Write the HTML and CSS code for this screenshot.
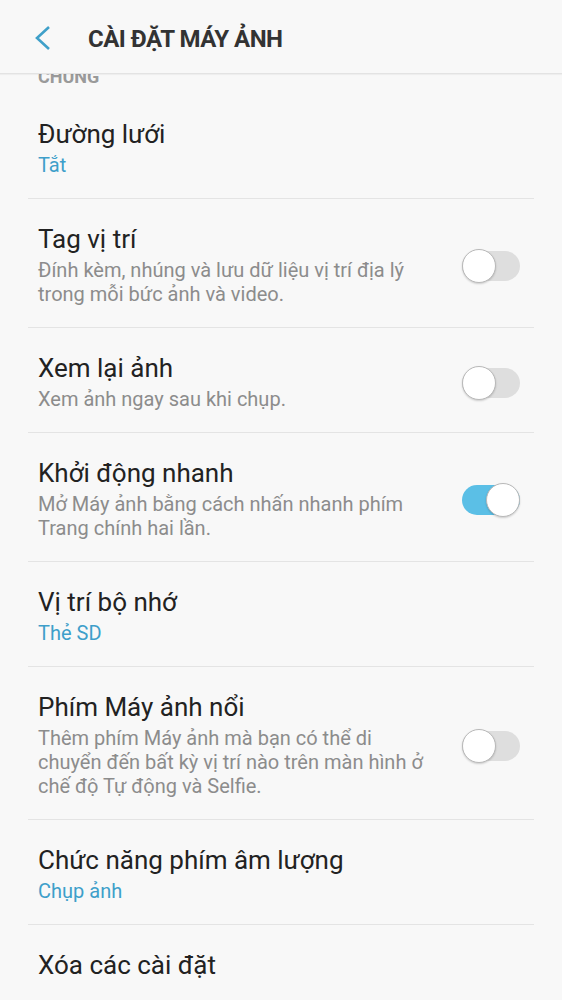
FILE: index.html
```html
<!DOCTYPE html>
<html lang="vi">
<head>
<meta charset="utf-8">
<title>Cài đặt máy ảnh</title>
<link rel="stylesheet" href="styles.css">
</head>
<body>
<div class="screen">
  <header class="appbar">
    <svg class="back" width="18" height="26" viewBox="0 0 18 26"><path d="M15 2 L3 13 L15 24" fill="none" stroke="#3fa0c9" stroke-width="2.6" stroke-linecap="butt"/></svg>
    <h1 class="title">CÀI ĐẶT MÁY ẢNH</h1>
  </header>
  <main class="list">
    <div class="section">CHUNG</div>

    <div class="row">
      <div class="text">
        <div class="name">Đường lưới</div>
        <div class="value">Tắt</div>
      </div>
    </div>

    <div class="row">
      <div class="text">
        <div class="name">Tag vị trí</div>
        <div class="desc">Đính kèm, nhúng và lưu dữ liệu vị trí địa lý trong mỗi bức ảnh và video.</div>
      </div>
      <div class="switch"><span class="knob"></span></div>
    </div>

    <div class="row">
      <div class="text">
        <div class="name">Xem lại ảnh</div>
        <div class="desc">Xem ảnh ngay sau khi chụp.</div>
      </div>
      <div class="switch"><span class="knob"></span></div>
    </div>

    <div class="row">
      <div class="text">
        <div class="name">Khởi động nhanh</div>
        <div class="desc">Mở Máy ảnh bằng cách nhấn nhanh phím Trang chính hai lần.</div>
      </div>
      <div class="switch on"><span class="knob"></span></div>
    </div>

    <div class="row">
      <div class="text">
        <div class="name">Vị trí bộ nhớ</div>
        <div class="value">Thẻ SD</div>
      </div>
    </div>

    <div class="row">
      <div class="text">
        <div class="name">Phím Máy ảnh nổi</div>
        <div class="desc">Thêm phím Máy ảnh mà bạn có thể di chuyển đến bất kỳ vị trí nào trên màn hình ở chế độ Tự động và Selfie.</div>
      </div>
      <div class="switch"><span class="knob"></span></div>
    </div>

    <div class="row">
      <div class="text">
        <div class="name">Chức năng phím âm lượng</div>
        <div class="value">Chụp ảnh</div>
      </div>
    </div>

    <div class="row last">
      <div class="text">
        <div class="name">Xóa các cài đặt</div>
      </div>
    </div>
  </main>
</div>
</body>
</html>
```

FILE: styles.css
```css
* { box-sizing: border-box; }
html, body {
  margin: 0;
  padding: 0;
  background: #f8f8f8;
}
body {
  font-family: Roboto, "Noto Sans", "DejaVu Sans", sans-serif;
  color: #202020;
}
.screen {
  width: 562px;
  height: 1000px;
  overflow: hidden;
  background: #f8f8f8;
}
.appbar {
  position: relative;
  z-index: 2;
  height: 74px;
  display: flex;
  align-items: center;
  background: #f8f8f8;
  border-bottom: 1px solid #e3e3e3;
  box-shadow: 0 1px 1px rgba(0,0,0,0.04);
  padding-left: 34px;
}
.back {
  display: block;
  margin-top: 3px;
}
.title {
  margin: 0 0 0 36px;
  font-size: 24px;
  font-weight: 700;
  color: #333333;
  letter-spacing: -0.5px;
  line-height: 30px;
  padding-top: 4px;
}
.list {
  margin-top: -8px;
}
.section {
  padding-left: 38px;
  font-size: 18px;
  font-weight: 700;
  line-height: 22px;
  color: #9a9a9a;
  margin-bottom: 6px;
}
.row {
  margin: 0 28px;
  padding: 24px 14px 21px 10px;
  border-bottom: 1px solid #e4e4e4;
  display: flex;
  align-items: center;
  gap: 25px;
}
.row.last { border-bottom: none; }
.text {
  flex: 1;
  min-width: 0;
}
.name {
  font-size: 26px;
  line-height: 32px;
  color: #222222;
}
.value {
  margin-top: 3px;
  font-size: 20px;
  line-height: 24px;
  color: #3e9fca;
}
.desc {
  margin-top: 3px;
  font-size: 20px;
  line-height: 24px;
  color: #8c8c8c;
}
.switch {
  position: relative;
  flex: none;
  width: 58px;
  height: 30px;
  border-radius: 15px;
  background: #dedede;
  margin-top: 2px;
}
.switch .knob {
  position: absolute;
  left: 0;
  top: -2px;
  width: 34px;
  height: 34px;
  border-radius: 50%;
  background: #ffffff;
  border: 1px solid #b9b9b9;
  box-shadow: 0 1px 2px rgba(0,0,0,0.18);
}
.switch.on {
  background: #5bbfe6;
}
.switch.on .knob {
  left: 24px;
}
```
